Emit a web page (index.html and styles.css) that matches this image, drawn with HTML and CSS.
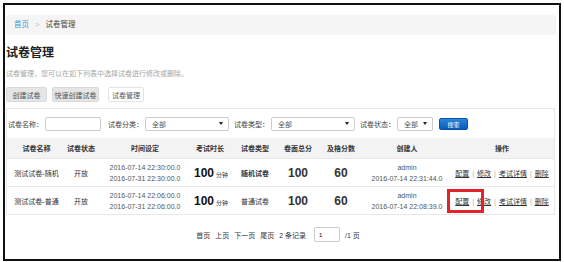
FILE: index.html
```html
<!DOCTYPE html>
<html>
<head>
    <meta charset="utf-8">
    <title>试卷管理</title>
    <link rel="stylesheet" href="styles.css">
</head>
<body>
    <div class="frame">
        <div class="breadcrumb">
            <a href="#">首页</a>
            <span class="sep">&gt;</span>
            <span>试卷管理</span>
        </div>

        <h1>试卷管理</h1>
        <p class="intro">试卷管理，您可以在如下列表中选择试卷进行修改或删除。</p>

        <div class="toolbar">
            <button class="btn btn-create">创建试卷</button>
            <button class="btn btn-quick">快速创建试卷</button>
            <button class="btn btn-active">试卷管理</button>
        </div>

        <div class="panel">
            <form class="search">
                <label>试卷名称：</label>
                <input type="text" class="text-input">
                <label>试卷分类：</label>
                <span class="select sel-wide"><select><option>全部</option></select></span>
                <label>试卷类型：</label>
                <span class="select sel-wide"><select><option>全部</option></select></span>
                <label>试卷状态：</label>
                <span class="select sel-small"><select><option>全部</option></select></span>
                <button type="button" class="btn-search">搜索</button>
            </form>

            <table class="grid">
                <colgroup>
                    <col class="c-name">
                    <col class="c-state">
                    <col class="c-time">
                    <col class="c-len">
                    <col class="c-type">
                    <col class="c-total">
                    <col class="c-pass">
                    <col class="c-user">
                    <col class="c-ops">
                </colgroup>
                <thead>
                    <tr>
                        <th>试卷名称</th>
                        <th>试卷状态</th>
                        <th>时间设定</th>
                        <th>考试时长</th>
                        <th>试卷类型</th>
                        <th>卷面总分</th>
                        <th>及格分数</th>
                        <th>创建人</th>
                        <th class="ops">操作</th>
                    </tr>
                </thead>
                <tbody>
                    <tr>
                        <td>测试试卷-随机</td>
                        <td>开放</td>
                        <td class="dates">2016-07-14 22:30:00.0<br>2016-07-31 22:30:00.0</td>
                        <td><span class="big">100</span> <span class="unit">分钟</span></td>
                        <td class="strong">随机试卷</td>
                        <td class="big">100</td>
                        <td class="big">60</td>
                        <td class="dates">admin<br>2016-07-14 22:31:44.0</td>
                        <td class="ops">
                            <a href="#">配置</a><span class="bar">|</span><a href="#">修改</a><span class="bar">|</span><a href="#">考试详情</a><span class="bar">|</span><a href="#">删除</a>
                        </td>
                    </tr>
                    <tr>
                        <td>测试试卷-普通</td>
                        <td>开放</td>
                        <td class="dates">2016-07-14 22:06:00.0<br>2016-07-31 22:06:00.0</td>
                        <td><span class="big">100</span> <span class="unit">分钟</span></td>
                        <td>普通试卷</td>
                        <td class="big">100</td>
                        <td class="big">60</td>
                        <td class="dates">admin<br>2016-07-14 22:08:39.0</td>
                        <td class="ops">
                            <span class="marked"><a href="#">配置</a><span class="bar">|</span></span><a href="#">修改</a><span class="bar">|</span><a href="#">考试详情</a><span class="bar">|</span><a href="#">删除</a>
                        </td>
                    </tr>
                </tbody>
            </table>
        </div>

        <div class="pager">
            <a href="#">首页</a>
            <a href="#">上页</a>
            <a href="#">下一页</a>
            <a href="#">尾页</a>
            <span>2 条记录</span>
            <input type="text" class="page-input" value="1">
            <span>/1 页</span>
        </div>
    </div>
</body>
</html>
```

FILE: styles.css
```css
body {
    margin: 0;
    font-family: "Liberation Sans", Arial, "Noto Sans CJK SC", sans-serif;
    font-size: 7px;
    color: #333;
    background: #fff;
}
.frame {
    box-sizing: border-box;
    width: 558px;
    height: 258px;
    margin: 3px 3px 0 3px;
    border: 2px solid #111;
    padding: 10px 3px 0 1px;
}
.breadcrumb {
    height: 20px;
    line-height: 20px;
    padding-left: 8px;
    background: #f5f5f5;
    border-radius: 3px;
    font-size: 7.5px;
    color: #444;
}
.breadcrumb a {
    color: #3a95d6;
    text-decoration: none;
}
.breadcrumb .sep {
    color: #bbb;
    margin: 0 4px;
}
h1 {
    margin: 10px 0 0 0;
    font-size: 12px;
    line-height: 16px;
    color: #222;
}
.intro {
    margin: 7px 0 0 0;
    line-height: 12px;
    color: #a5a5a5;
}
.toolbar {
    margin-top: 7px;
    display: flex;
    gap: 5px;
}
.btn {
    height: 15px;
    padding: 0;
    font-family: inherit;
    font-size: 7px;
    color: #555;
    background: #e6e6e6;
    border: 1px solid #d9d9d9;
    border-radius: 2px;
}
.btn-create {
    width: 41px;
}
.btn-quick {
    width: 47px;
}
.btn-active {
    width: 36px;
    margin-left: 4px;
    background: #fff;
    border-color: #e3e3e3;
}
.panel {
    margin-top: 6px;
    width: 549px;
    box-sizing: border-box;
    border: 1px solid #e8e8e8;
}
.search {
    display: flex;
    align-items: center;
    height: 29px;
    padding-left: 1px;
    padding-top: 1px;
    box-sizing: border-box;
}
.search label {
    margin-right: 2px;
    color: #444;
}
.text-input {
    box-sizing: border-box;
    width: 56px;
    height: 14px;
    margin-right: 7px;
    border: 1px solid #ccc;
    border-radius: 2px;
}
.select {
    position: relative;
    margin-right: 5px;
}
.select select {
    appearance: none;
    box-sizing: border-box;
    height: 14px;
    padding: 0 0 0 6px;
    font-family: inherit;
    font-size: 7px;
    color: #555;
    background: #fff;
    border: 1px solid #ccc;
    border-radius: 2px;
}
.select::after {
    content: "";
    position: absolute;
    right: 6px;
    top: 5px;
    border-left: 2px solid transparent;
    border-right: 2px solid transparent;
    border-top: 3px solid #222;
}
.sel-wide select {
    width: 84px;
}
.sel-small select {
    width: 36px;
}
.btn-search {
    margin-left: 1px;
    width: 29px;
    height: 12px;
    padding: 0;
    font-family: inherit;
    font-size: 6px;
    color: #fff;
    background: linear-gradient(#2b86d9, #0a5bb8);
    border: 1px solid #0a54a8;
    border-radius: 2px;
}
.grid {
    width: 547px;
    table-layout: fixed;
    border-collapse: collapse;
}
.c-name { width: 59px; }
.c-state { width: 30px; }
.c-time { width: 98px; }
.c-len { width: 32px; }
.c-type { width: 58px; }
.c-total { width: 28px; }
.c-pass { width: 58px; }
.c-user { width: 74px; }
.c-ops { width: 110px; }
.grid th {
    height: 20px;
    padding: 0;
    background: #f3f3f3;
    font-weight: bold;
    color: #333;
    white-space: nowrap;
}
.grid td {
    height: 27px;
    padding: 0;
    text-align: center;
    white-space: nowrap;
    border-top: 1px solid #e8e8e8;
    color: #333;
}
.grid .ops {
    padding-left: 6px;
}
.grid .dates {
    line-height: 11px;
    color: #555;
}
.big {
    font-size: 12px;
    font-weight: bold;
    color: #111;
}
.unit {
    font-size: 6px;
}
.strong {
    font-weight: bold;
}
.ops a {
    color: #333;
    text-decoration: underline;
}
.bar {
    color: #aaa;
    margin: 0 3px;
}
.marked {
    position: relative;
}
.marked::after {
    content: "";
    position: absolute;
    left: -8px;
    right: -7px;
    top: -9px;
    bottom: -8px;
    border: 3px solid #e4222b;
}
.pager {
    margin-top: 12px;
    display: flex;
    align-items: center;
    justify-content: center;
    gap: 5px;
    padding-right: 6px;
}
.pager a {
    color: #333;
    text-decoration: none;
}
.page-input {
    box-sizing: border-box;
    width: 26px;
    height: 15px;
    padding: 0 4px;
    font-size: 6px;
    border: 1px solid #ccc;
    border-radius: 2px;
    margin-left: 3px;
}
```
